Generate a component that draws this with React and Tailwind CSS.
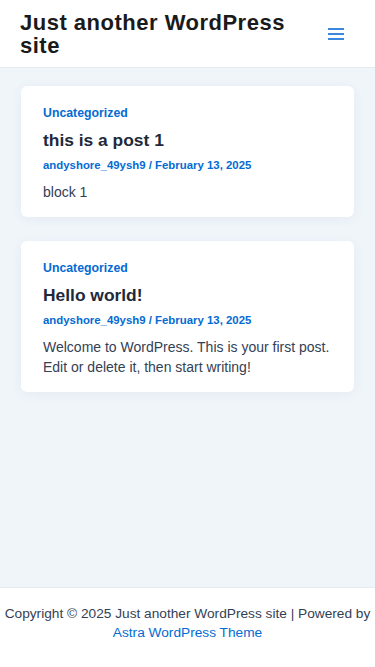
export default function App() {
  const posts = [
    {
      title: "this is a post 1",
      body: "block 1",
    },
    {
      title: "Hello world!",
      body: "Welcome to WordPress. This is your first post. Edit or delete it, then start writing!",
    },
  ];
  return (
    <div
      className="min-h-[667px] flex flex-col bg-[#f0f5fa]"
      style={{ fontFamily: '"Liberation Sans", Arial, sans-serif' }}
    >
      <header className="bg-white border-b border-[#e6ebf0] h-[68px] flex items-center justify-between pl-5 pr-[31px]">
        <h1 className="text-[22px] leading-[23px] tracking-[0.5px] font-bold text-[#1a1a1a] w-[290px]">
          Just another WordPress site
        </h1>
        <button className="flex flex-col gap-[3px] w-[16px]">
          <span className="block h-[2px] w-full bg-[#3b87de]" />
          <span className="block h-[2px] w-full bg-[#3b87de]" />
          <span className="block h-[2px] w-full bg-[#3b87de]" />
        </button>
      </header>
      <main className="flex-1 px-[21px] pt-[18px] flex flex-col gap-6">
        {posts.map((p, i) => (
          <article
            key={i}
            className="bg-white rounded-md shadow-[0_2px_12px_rgba(30,60,100,0.06)] px-[22px] pt-[17px] pb-[15px]"
          >
            <div className="text-[12.3px] leading-[20px] font-bold text-[#046bd2]">Uncategorized</div>
            <h2 className="mt-1 text-[17.4px] leading-[26px] font-bold text-[#1e293b]">{p.title}</h2>
            <div className="mt-[3px] text-[11.4px] leading-[18px] font-bold text-[#046bd2]">
              andyshore_49ysh9 / February 13, 2025
            </div>
            <p className="mt-2 text-[14px] leading-[20px] text-[#334155]">{p.body}</p>
          </article>
        ))}
      </main>
      <footer className="bg-white border-t border-[#e6ebf0] h-[80px] pt-[16px] text-center text-[13.7px] leading-[19px] text-[#334155]">
        <p>Copyright © 2025 Just another WordPress site | Powered by</p>
        <p className="text-[#046bd2]">Astra WordPress Theme</p>
      </footer>
    </div>
  );
}
